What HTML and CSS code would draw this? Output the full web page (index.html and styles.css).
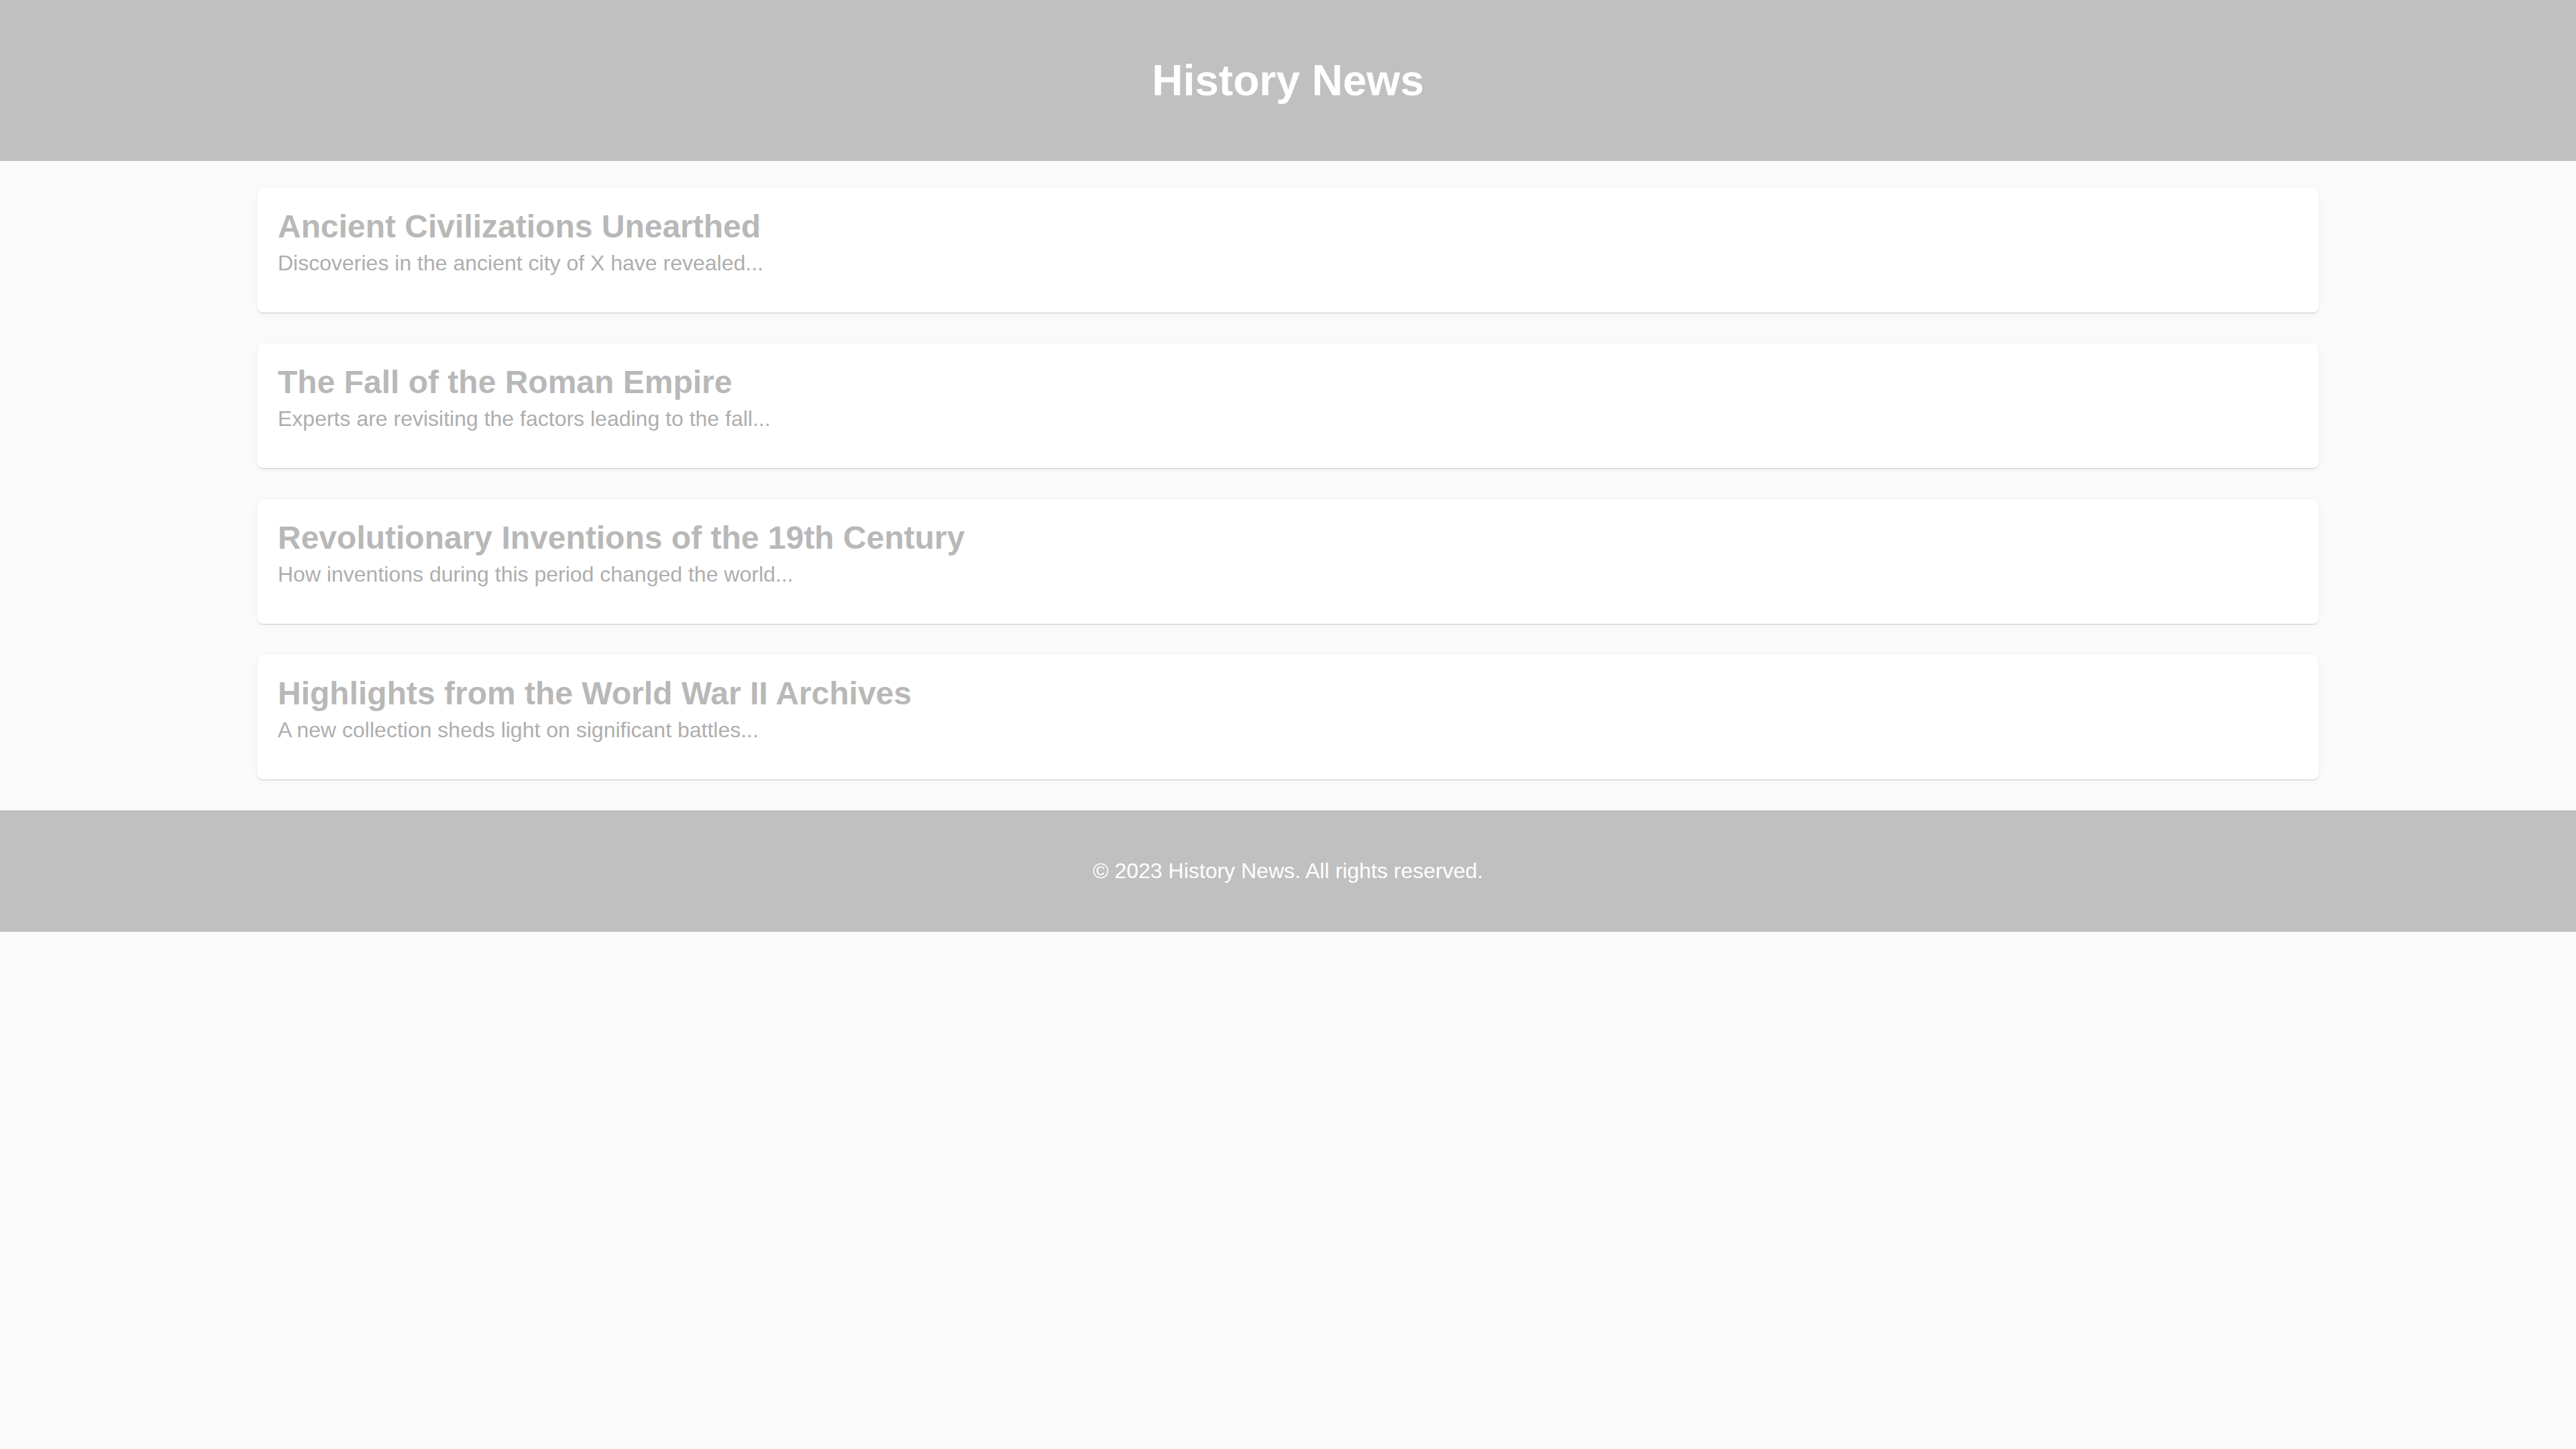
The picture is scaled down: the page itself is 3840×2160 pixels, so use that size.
FILE: index.html
```html
<!DOCTYPE html>
<html lang="en">
<head>
<meta charset="utf-8">
<title>History News</title>
<link rel="stylesheet" href="styles.css">
</head>
<body>
<header class="site-header">
  <h1 class="site-title">History News</h1>
</header>
<main class="news-list">
  <article class="news-card">
    <h2 class="news-title">Ancient Civilizations Unearthed</h2>
    <p class="news-summary">Discoveries in the ancient city of X have revealed...</p>
  </article>
  <article class="news-card">
    <h2 class="news-title">The Fall of the Roman Empire</h2>
    <p class="news-summary">Experts are revisiting the factors leading to the fall...</p>
  </article>
  <article class="news-card">
    <h2 class="news-title">Revolutionary Inventions of the 19th Century</h2>
    <p class="news-summary">How inventions during this period changed the world...</p>
  </article>
  <article class="news-card">
    <h2 class="news-title">Highlights from the World War II Archives</h2>
    <p class="news-summary">A new collection sheds light on significant battles...</p>
  </article>
</main>
<footer class="site-footer">
  <p class="footer-text">&copy; 2023 History News. All rights reserved.</p>
</footer>
</body>
</html>
```

FILE: styles.css
```css
html, body {
  margin: 0;
  padding: 0;
}

body {
  background: #fafafa;
  font-family: "Liberation Sans", Arial, sans-serif;
}

.site-header {
  background: #c0c0c0;
  padding: 40px;
  text-align: center;
}

.site-title {
  margin: 43px 0;
  font-size: 64px;
  line-height: 74px;
  font-weight: bold;
  color: #ffffff;
}

.news-list {
  display: flex;
  flex-direction: column;
  gap: 46px;
  padding: 40px 0 46px;
}

.news-card {
  width: 80%;
  box-sizing: border-box;
  margin: 0 auto;
  background: #ffffff;
  border-radius: 8px;
  padding: 30px 30px;
  box-shadow: 0 1px 0 rgba(0, 0, 0, 0.16), 0 2px 10px rgba(0, 0, 0, 0.05);
}

.news-title {
  margin: 0 0 9px;
  font-size: 48px;
  font-weight: bold;
  color: #b8b8b8;
}

.news-summary {
  margin: 0 0 25px;
  font-size: 32px;
  color: #aeaeae;
}

.site-footer {
  background: #c0c0c0;
  padding: 40px;
  text-align: center;
}

.footer-text {
  margin: 32px 0;
  font-size: 32px;
  color: #ffffff;
}
```
